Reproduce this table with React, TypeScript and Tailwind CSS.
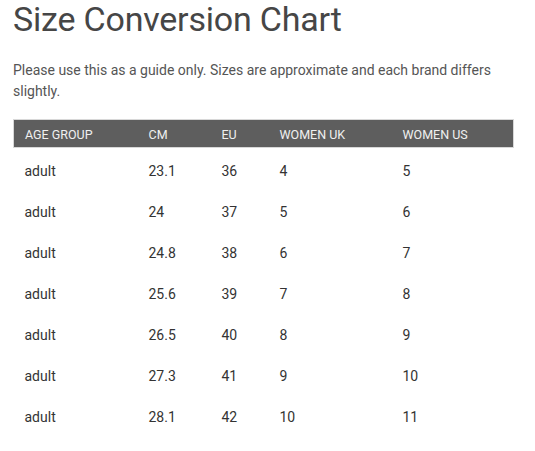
const rows = [
  ["adult", "23.1", "36", "4", "5"],
  ["adult", "24", "37", "5", "6"],
  ["adult", "24.8", "38", "6", "7"],
  ["adult", "25.6", "39", "7", "8"],
  ["adult", "26.5", "40", "8", "9"],
  ["adult", "27.3", "41", "9", "10"],
  ["adult", "28.1", "42", "10", "11"],
];

const headers = ["Age group", "CM", "EU", "Women UK", "Women US"];

export default function App() {
  return (
    <div className="min-h-screen bg-white px-[13px] font-['Roboto',sans-serif] text-[#464646]">
      <h1 className="text-[34px] leading-[38px] font-normal tracking-[-0.2px]">Size Conversion Chart</h1>
      <p className="mt-[22px] w-[500px] text-[14px] leading-[21px] text-[#555]">
        Please use this as a guide only. Sizes are approximate and each brand differs slightly.
      </p>

      <table className="mt-[17px] w-[501px] table-fixed border-collapse text-left">
        <colgroup>
          <col className="w-[124px]" />
          <col className="w-[73px]" />
          <col className="w-[58px]" />
          <col className="w-[123px]" />
          <col />
        </colgroup>
        <thead>
          <tr className="h-[28px] border border-[#d8d8d8] bg-[#5e5e5e]">
            {headers.map((h) => (
              <th key={h} className="pl-[11px] pt-[3px] text-[12.5px] font-normal uppercase text-[#f0f0f0]">
                {h}
              </th>
            ))}
          </tr>
        </thead>
        <tbody>
          {rows.map((r, i) => (
            <tr key={i} className="h-[41px]">
              {r.map((c, j) => (
                <td key={j} className="pl-[11px] pt-[6px] text-[14px] text-[#333]">
                  {c}
                </td>
              ))}
            </tr>
          ))}
        </tbody>
      </table>
    </div>
  );
}
